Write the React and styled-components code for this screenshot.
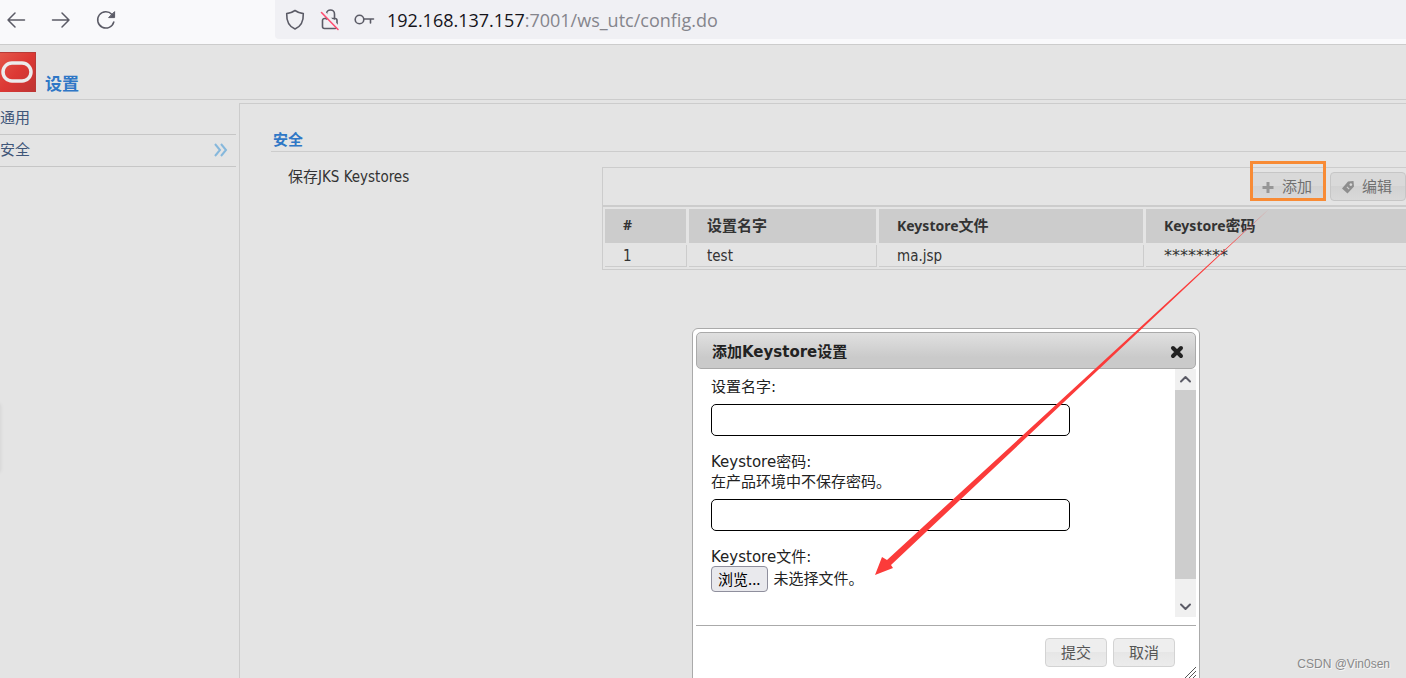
/**
*
* Keystore settings page
*
*/

import React, { useRef, useState } from 'react'
import styled, { createGlobalStyle } from 'styled-components'

const GlobalStyle = createGlobalStyle`
  * {
    box-sizing: border-box;
  }
  body {
    margin: 0;
    background: #e4e4e4;
    color: #333;
    font-family: "DejaVu Sans Condensed", "Noto Sans CJK SC", sans-serif;
    font-size: 15px;
    line-height: 20px;
  }
  button, input {
    font: inherit;
  }
`

const Page = styled.div`
  position: relative;
  display: flex;
  flex-direction: column;
  height: 100vh;
  overflow: hidden;
`

/* browser bar */

const Browser = styled.div`
  display: flex;
  flex-shrink: 0;
  height: 45px;
  background: #f9f9fb;
  border-bottom: 1px solid #ccc;
`

const NavButtons = styled.div`
  display: flex;
  gap: 21px;
  width: 275px;
  padding: 8px 4px;
`

const PlainButton = styled.button`
  display: flex;
  align-items: center;
  justify-content: center;
  width: 24px;
  height: 24px;
  padding: 0;
  border: 0;
  background: none;
  color: ${props => props.$color || '#5b5b66'};
`

const AddressBar = styled.div`
  display: flex;
  flex: 1;
  align-items: center;
  gap: 12px;
  height: 39px;
  padding-left: 8px;
  background: #f0f0f4;
  border-radius: 0 0 0 4px;
  color: #5b5b66;
`

const Url = styled.div`
  font-family: "Open Sans", "Noto Sans", sans-serif;
  font-size: 18px;
  line-height: 24px;
  color: #85858c;
`

const Host = styled.span`
  color: #15141a;
`

/* page header */

const Header = styled.header`
  display: flex;
  flex-shrink: 0;
  align-items: flex-end;
  gap: 9px;
  height: 55px;
  padding-bottom: 7px;
  border-bottom: 1px solid #ccc;
`

const Title = styled.h1`
  margin: 0;
  font-size: 17px;
  line-height: 16px;
  color: #2f77c6;
`

const Main = styled.div`
  display: flex;
  flex: 1;
  gap: 3px;
  margin-top: 3px;
`

const Sidebar = styled.nav`
  width: 236px;
  flex-shrink: 0;
`

const NavItem = styled.a`
  display: flex;
  align-items: center;
  justify-content: space-between;
  height: 32px;
  padding: 0 8px 2px 0;
  border-bottom: 1px solid #c6c6c6;
  color: #3f5679;
  text-decoration: none;
`

const Content = styled.main`
  flex: 1;
  min-width: 0;
  padding: 26px 0 0 31px;
  border: solid #ccc;
  border-width: 1px 0 0 1px;
  overflow: hidden;
`

const SectionTitle = styled.h2`
  margin: 0;
  padding: 0 2px 1px;
  border-bottom: 1px solid #ccc;
  font-size: 15px;
  line-height: 20px;
  color: #2f77c6;
`

const Setting = styled.div`
  display: flex;
  margin-top: 15px;
`

const SettingName = styled.div`
  width: 331px;
  flex-shrink: 0;
  padding-left: 17px;
`

/* runs on under the right edge of the window */
const Panel = styled.div`
  flex: 1;
  margin-right: -8px;
  border: 1px solid #ccc;
`

const Toolbar = styled.div`
  display: flex;
  align-items: flex-start;
  justify-content: flex-end;
  gap: 4px;
  height: 39px;
  padding: 4px 7px 0 0;
  border-bottom: 2px solid #ccc;
`

const Button = styled.button`
  display: flex;
  align-items: center;
  justify-content: center;
  gap: ${props => props.$icon ? '7px' : '0'};
  height: 29px;
  padding: ${props => props.$icon ? '0 13px 0 10px' : '0 15px'};
  border: 1px solid ${props => props.$icon ? '#c6c6c6' : '#d3d3d3'};
  border-radius: 4px;
  background: ${props => props.$icon
    ? 'linear-gradient(#d9d9d9 50%, #d2d2d2 50%, #d9d9d9)'
    : 'linear-gradient(#eee 50%, #e6e6e6 50%, #ececec)'};
  color: ${props => props.$icon ? '#707070' : '#555'};
  line-height: 20px;
  white-space: nowrap;
`

const Highlight = styled.div`
  position: relative;
  &::after {
    content: '';
    position: absolute;
    top: -11px;
    right: 0;
    bottom: 0;
    left: 0;
    border: 3px solid #f88b35;
    pointer-events: none;
  }
`

const Table = styled.table`
  width: 100%;
  table-layout: fixed;
  border-collapse: separate;
  border-spacing: 2px;
`

const Col = styled.col`
  width: ${props => props.$width};
`

const Th = styled.th`
  height: 34px;
  padding: 0 18px 2px;
  background: #ccc;
  background-clip: padding-box;
  border-right: 1px solid #e4e4e4;
  font-family: "Noto Sans", "Noto Sans CJK SC", sans-serif;
  font-size: 14px;
  line-height: 20px;
  text-align: left;
`

const Td = styled.td`
  height: 22px;
  padding: 0 18px;
  border: solid #ccc;
  border-width: 0 1px 1px 0;
`

const Han = styled.span`
  font-size: 15px;
`

const Mask = styled.span`
  font-family: "DejaVu Sans", sans-serif;
  font-size: 16px;
`

/* dialog */

const Dialog = styled.section`
  position: absolute;
  top: 328px;
  left: 692px;
  width: 508px;
  padding: 3px;
  background: #fff;
  border: 1px solid #aaa;
  border-radius: 6px;
  color: #222;
  font-family: "DejaVu Sans", "Noto Sans CJK SC", sans-serif;
`

const DialogHeader = styled.div`
  display: flex;
  align-items: center;
  justify-content: space-between;
  height: 37px;
  padding: 2px 6px 0 15px;
  border: 1px solid #aaa;
  border-radius: 5px;
  background: linear-gradient(#e0e0e0, #cacaca 70%, #cacaca);
`

const DialogTitle = styled.h2`
  margin: 0;
  font-size: 15px;
  line-height: 20px;
`

const DialogBody = styled.div`
  display: flex;
  height: 248px;
`

const Form = styled.form`
  display: flex;
  flex: 1;
  flex-direction: column;
  gap: 16px;
  padding: 8px 15px;
`

const Field = styled.div`
  display: flex;
  flex-direction: column;
`

const Label = styled.label`
  line-height: 20px;
`

const TextInput = styled.input`
  width: 359px;
  height: 32px;
  margin-top: 7px;
  padding: 0 8px;
  background: #fff;
  border: 1px solid #000;
  border-radius: 5px;
`

const FileRow = styled.div`
  display: flex;
  align-items: center;
  gap: 6px;
  height: 24px;
`

const BrowseButton = styled.button`
  height: 26px;
  padding: 0 6px;
  border: 1px solid #8f8f9d;
  border-radius: 4px;
  background: #e9e9ed;
  color: #000;
  font-family: "Noto Sans CJK SC", sans-serif;
  line-height: 20px;
`

const Scrollbar = styled.div`
  display: flex;
  flex-direction: column;
  justify-content: space-between;
  width: 21px;
  background: #f0f0f0;
`

const ScrollButton = styled(PlainButton)`
  width: 21px;
  height: 21px;
`

const Thumb = styled.div`
  height: 189px;
  margin-bottom: auto;
  background: #cdcdcd;
`

const DialogFooter = styled.div`
  display: flex;
  justify-content: flex-end;
  gap: 6px;
  height: 61px;
  margin-top: 8px;
  padding: 12px 21px 0 0;
  border-top: 1px solid #aaa;
`

const ResizeGrip = styled.svg`
  position: absolute;
  top: 338px;
  right: 3px;
`

const Arrow = styled.svg`
  position: absolute;
  top: 209px;
  left: 875px;
  pointer-events: none;
`

const Watermark = styled.div`
  position: absolute;
  right: 16px;
  bottom: 6px;
  color: #888;
  font-family: "Liberation Sans", sans-serif;
  font-size: 12px;
  line-height: 16px;
  text-shadow: 1px 1px 0 #f6f6f6;
`

const EdgeShadow = styled.div`
  position: absolute;
  top: 404px;
  left: -8px;
  width: 8px;
  height: 68px;
  box-shadow: 0 0 4px rgba(0, 0, 0, 0.1);
`

function Stroke ({ size = 20, width = 1.5, children }) {
  return (
    <svg
      width={size}
      height={size}
      viewBox={`0 0 ${size} ${size}`}
      fill='none'
      stroke='currentColor'
      strokeWidth={width}
      strokeLinecap='round'
      strokeLinejoin='round'
      aria-hidden='true'
    >
      {children}
    </svg>
  )
}

function BrowserBar () {
  return (
    <Browser>
      <NavButtons>
        <PlainButton aria-label='后退'>
          <Stroke><path d='M18.5 10H2M9 3L2 10l7 7' /></Stroke>
        </PlainButton>
        <PlainButton aria-label='前进'>
          <Stroke><path d='M1.5 10H18M11 3l7 7-7 7' /></Stroke>
        </PlainButton>
        <PlainButton aria-label='刷新'>
          <Stroke>
            <path d='M17.8 12A8.2 8.2 0 1 1 16 4.4' />
            <path d='M18.6 2v5.6H13z' fill='currentColor' strokeWidth='1' />
          </Stroke>
        </PlainButton>
      </NavButtons>
      <AddressBar>
        <Stroke size={24} width={1.6}>
          <path d='M12 2.500c2.500 1.800 5 2.700 8.300 3.100C20.600 13.500 18 18.500 12 21 6 18.500 3.400 13.500 3.700 5.600 7 5.200 9.500 4.300 12 2.500z' />
        </Stroke>
        <Stroke size={22} width={1.6}>
          <path d='M7.500 10V5a4 4 0 0 1 8 0v5' />
          <path d='M5.500 9.500h10.500a2 2 0 0 1 2 2v6a2 2 0 0 1-2 2h-10.500a2 2 0 0 1-2-2v-6a2 2 0 0 1 2-2z' />
          <path d='M4 2.500l16.500 17' stroke='#f0f0f4' strokeWidth='3' />
          <path d='M2.500 3.500l16.500 17' stroke='#ff4f72' />
        </Stroke>
        <Stroke size={22} width={1.6}>
          <circle cx='6.500' cy='10.500' r='4.300' />
          <path d='M11 10h9.500M17.500 10v4' />
        </Stroke>
        <Url><Host>192.168.137.157</Host>:7001/ws_utc/config.do</Url>
      </AddressBar>
    </Browser>
  )
}

function Logo () {
  return (
    <svg width='36' height='40' viewBox='0 0 36 40' aria-hidden='true'>
      <defs>
        <linearGradient id='logo' x1='0' y1='0' x2='1' y2='1'>
          <stop offset='0' stopColor='#e4574a' />
          <stop offset='0.5' stopColor='#dc3834' />
          <stop offset='1' stopColor='#bd3534' />
        </linearGradient>
      </defs>
      <rect width='36' height='40' fill='url(#logo)' />
      <path d='M0 .5h35.500V40' fill='none' stroke='#b83b38' />
      <rect x='3' y='11' width='28' height='18' rx='9' fill='none' stroke='#ececec' strokeWidth='3.500' />
    </svg>
  )
}

function AddDialog () {
  const fileInput = useRef(null)
  const [fileName, setFileName] = useState('')
  return (
    <Dialog role='dialog' aria-labelledby='dialog-title'>
      <DialogHeader>
        <DialogTitle id='dialog-title'>添加Keystore设置</DialogTitle>
        <PlainButton aria-label='关闭' $color='#222'>
          <Stroke size={14} width={4}><path d='M3 3l8 8M11 3l-8 8' /></Stroke>
        </PlainButton>
      </DialogHeader>
      <DialogBody>
        <Form id='keystore-form' onSubmit={event => event.preventDefault()}>
          <Field>
            <Label htmlFor='name'>设置名字:</Label>
            <TextInput id='name' />
          </Field>
          <Field>
            <Label htmlFor='password'>Keystore密码:<br />在产品环境中不保存密码。</Label>
            <TextInput id='password' type='password' />
          </Field>
          <Field>
            <Label htmlFor='file'>Keystore文件:</Label>
            <FileRow>
              <input
                id='file'
                type='file'
                hidden
                ref={fileInput}
                onChange={event => setFileName(event.target.files[0] ? event.target.files[0].name : '')}
              />
              <BrowseButton type='button' onClick={() => fileInput.current.click()}>浏览...</BrowseButton>
              <span>{fileName || '未选择文件。'}</span>
            </FileRow>
          </Field>
        </Form>
        <Scrollbar>
          <ScrollButton aria-label='向上滚动'>
            <Stroke size={13} width={2}><path d='M2 8.500l4.500-4.500L11 8.500' /></Stroke>
          </ScrollButton>
          <Thumb />
          <ScrollButton aria-label='向下滚动'>
            <Stroke size={13} width={2}><path d='M2 4.500L6.500 9 11 4.500' /></Stroke>
          </ScrollButton>
        </Scrollbar>
      </DialogBody>
      <DialogFooter>
        <Button type='submit' form='keystore-form'>提交</Button>
        <Button type='button'>取消</Button>
      </DialogFooter>
      <ResizeGrip width='13' height='13' viewBox='0 0 13 13' stroke='#555' aria-hidden='true'>
        <path d='M0 13L13 0M4 13l9-9M8 13l5-5' />
      </ResizeGrip>
    </Dialog>
  )
}

function App () {
  return (
    <Page>
      <GlobalStyle />
      <BrowserBar />
      <Header>
        <Logo />
        <Title>设置</Title>
      </Header>
      <Main>
        <Sidebar>
          <NavItem href='#general'>通用</NavItem>
          <NavItem href='#security'>
            安全
            <svg width='15' height='14' viewBox='0 0 15 14' fill='none' stroke='#86b8dc' strokeWidth='2' aria-hidden='true'>
              <path d='M2 1l5 6-5 6M8 1l5 6-5 6' />
            </svg>
          </NavItem>
        </Sidebar>
        <Content>
          <SectionTitle>安全</SectionTitle>
          <Setting>
            <SettingName>保存JKS Keystores</SettingName>
            <Panel>
              <Toolbar>
                <Highlight>
                  <Button $icon>
                    <svg width='14' height='14' viewBox='0 0 14 14' stroke='#969696' strokeWidth='3' aria-hidden='true'>
                      <path d='M7 2v11M1.500 7.500h11' />
                    </svg>
                    添加
                  </Button>
                </Highlight>
                <Button $icon>
                  <svg width='14' height='14' viewBox='0 0 14 14' fill='#8e8e8e' aria-hidden='true'>
                    <path fillRule='evenodd' d='M7 1.500L12.500 1l.5 5.500-6.500 7L1 8.500zM9.800 3.200a1.400 1.400 0 1 0 .1 0zM5.500 7.300l2.300 2.200.8-.8-2.300-2.200z' />
                  </svg>
                  编辑
                </Button>
              </Toolbar>
              <Table>
                <colgroup>
                  <Col $width='82px' />
                  <Col $width='188px' />
                  <Col $width='265px' />
                  <Col />
                </colgroup>
                <thead>
                  <tr>
                    <Th>#</Th>
                    <Th><Han>设置名字</Han></Th>
                    <Th>Keystore<Han>文件</Han></Th>
                    <Th>Keystore<Han>密码</Han></Th>
                  </tr>
                </thead>
                <tbody>
                  <tr>
                    <Td>1</Td>
                    <Td>test</Td>
                    <Td>ma.jsp</Td>
                    <Td><Mask>********</Mask></Td>
                  </tr>
                </tbody>
              </Table>
            </Panel>
          </Setting>
        </Content>
      </Main>
      <EdgeShadow />
      <AddDialog />
      <Arrow width='395' height='367' viewBox='0 0 395 367' fill='#fb3b3a' aria-hidden='true'>
        <path d='M394 0L12 351l-5-3L0 366l18-7-2-3z' />
      </Arrow>
      <Watermark>CSDN @Vin0sen</Watermark>
    </Page>
  )
}

export default App
